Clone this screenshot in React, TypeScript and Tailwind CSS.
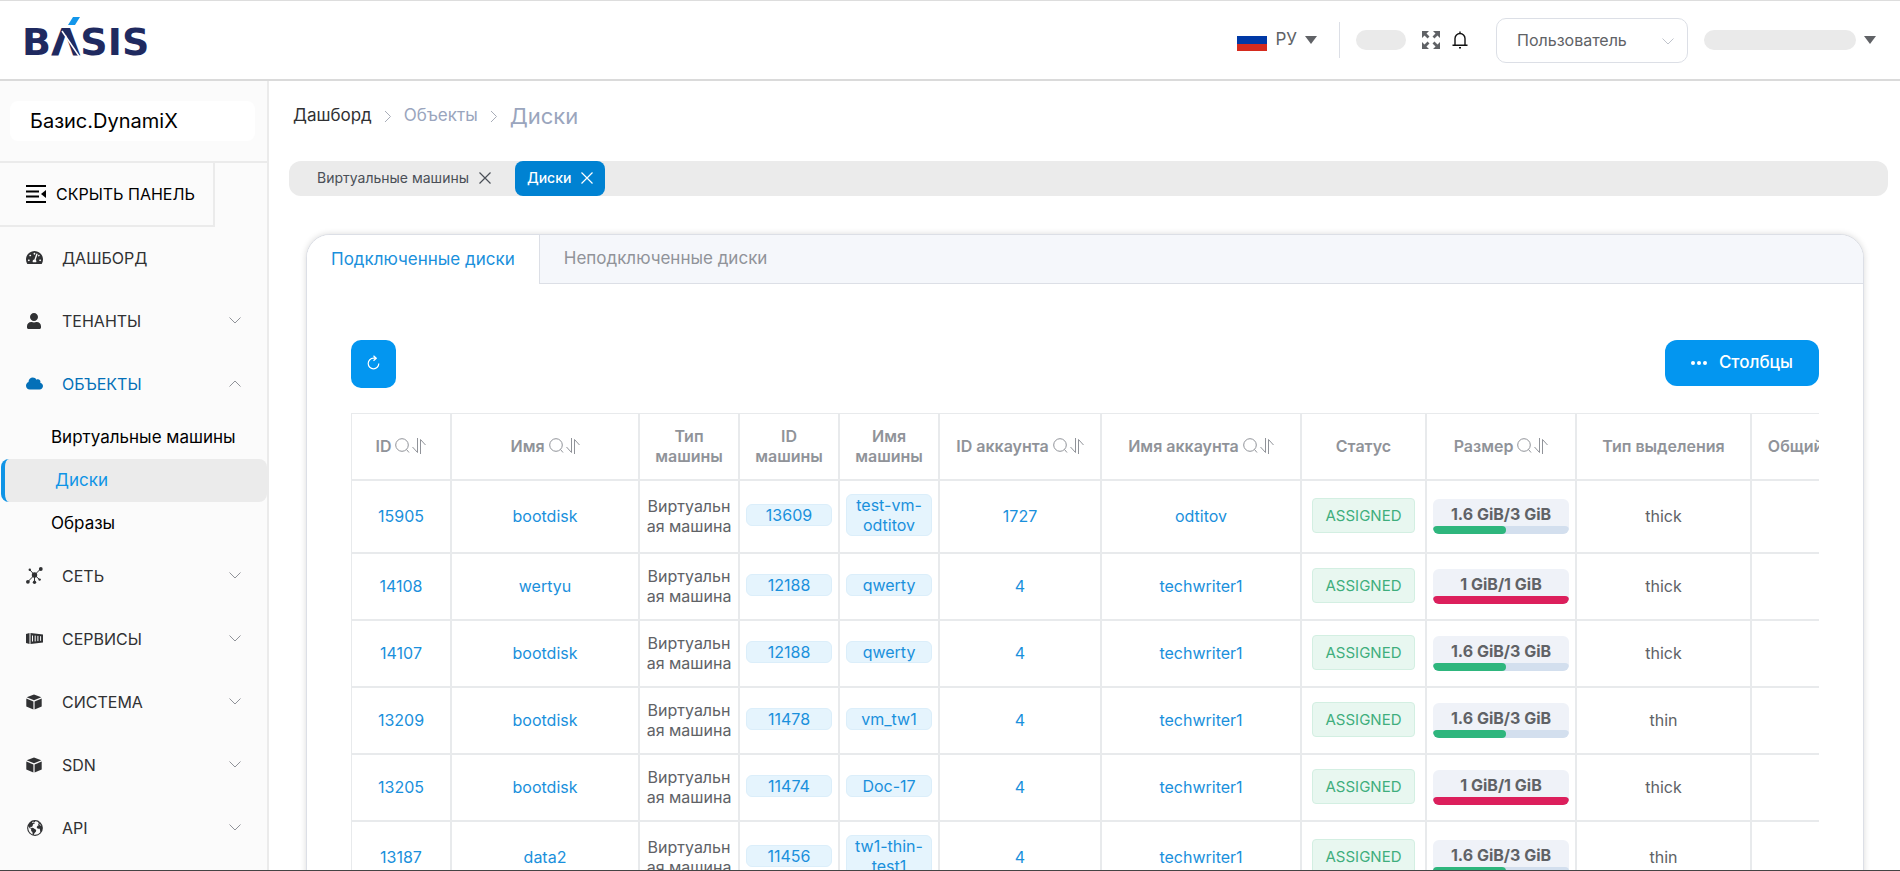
import React, { useState } from "react";
import clsx from "clsx";
import { FaCloud, FaTachometerAlt, FaUser } from "react-icons/fa";
import { IoEarth } from "react-icons/io5";

type Disk = {
  id: number;
  name: string;
  vmId: number;
  vmName: string;
  accountId: number;
  accountName: string;
  used: number;
  size: number;
  provision: string;
};

type MenuEntry = {
  label: string;
  icon: React.ReactNode;
  children?: string[];
};

const disks: Disk[] = [
  { id: 15905, name: "bootdisk", vmId: 13609, vmName: "test-vm-odtitov", accountId: 1727, accountName: "odtitov", used: 1.6, size: 3, provision: "thick" },
  { id: 14108, name: "wertyu", vmId: 12188, vmName: "qwerty", accountId: 4, accountName: "techwriter1", used: 1, size: 1, provision: "thick" },
  { id: 14107, name: "bootdisk", vmId: 12188, vmName: "qwerty", accountId: 4, accountName: "techwriter1", used: 1.6, size: 3, provision: "thick" },
  { id: 13209, name: "bootdisk", vmId: 11478, vmName: "vm_tw1", accountId: 4, accountName: "techwriter1", used: 1.6, size: 3, provision: "thin" },
  { id: 13205, name: "bootdisk", vmId: 11474, vmName: "Doc-17", accountId: 4, accountName: "techwriter1", used: 1, size: 1, provision: "thick" },
  { id: 13187, name: "data2", vmId: 11456, vmName: "tw1-thin-test1", accountId: 4, accountName: "techwriter1", used: 1.6, size: 3, provision: "thin" },
];

const columns = [
  { title: "ID", width: "w-[100px]", tools: true },
  { title: "Имя", width: "w-[188px]", tools: true },
  { title: "Тип машины", width: "w-[100px]" },
  { title: "ID машины", width: "w-[100px]" },
  { title: "Имя машины", width: "w-[100px]" },
  { title: "ID аккаунта", width: "w-[162px]", tools: true },
  { title: "Имя аккаунта", width: "w-[200px]", tools: true },
  { title: "Статус", width: "w-[125px]" },
  { title: "Размер", width: "w-[150px]", tools: true },
  { title: "Тип выделения", width: "w-[175px]" },
  { title: "Общий доступ", width: "w-[150px]" },
];

function Logo() {
  return (
    <svg width="130" height="42" viewBox="0 0 130 42" role="img" aria-label="BASIS" className="overflow-visible">
      <text x="-2" y="38" fontSize="38" className="fill-[#1f2a60] font-['DejaVu_Sans',sans-serif] font-bold">
        BΛSIS
      </text>
      <path d="M38 14 57 42" stroke="#fff" strokeWidth="1.5" />
      <path d="M49 0h7l-5 8h-7z" fill="#1296ea" />
    </svg>
  );
}

function Chevron({ className }: { className?: string }) {
  return (
    <svg width="12" height="7" viewBox="0 0 12 7" fill="none" stroke="currentColor" className={className}>
      <path d="M.5.5 6 6 11.5.5" />
    </svg>
  );
}

function Caret() {
  return (
    <svg width="12" height="8" viewBox="0 0 12 8" className="shrink-0 fill-[#606266]">
      <path d="M0 0h12L6 8z" />
    </svg>
  );
}

function Flag() {
  return (
    <svg width="30" height="22" viewBox="0 0 30 22" className="shrink-0">
      <path d="M0 0h30v7H0z" fill="#fff" />
      <path d="M0 7h30v8H0z" fill="#0039a6" />
      <path d="M0 15h30v7H0z" fill="#d52b1e" />
    </svg>
  );
}

function ExpandIcon() {
  return (
    <svg width="18" height="18" viewBox="0 0 18 18" fill="#606266" stroke="#606266" strokeWidth="2.8">
      <path d="M0 0h7L0 7zM18 0v7l-7-7zM0 18v-7l7 7zM18 18h-7l7-7z" stroke="none" />
      <path d="m2 2 4.5 4.5M16 2l-4.5 4.5M2 16l4.5-4.5M16 16l-4.5-4.5" />
    </svg>
  );
}

function BellIcon() {
  return (
    <svg width="16" height="18" viewBox="0 0 16 18" fill="none" stroke="#111" strokeWidth="1.4">
      <path d="M.5 14.3h15M3 14V7.5a5 5 0 0 1 10 0V14M8 .5v2M7 16.7h2" />
    </svg>
  );
}

function CollapseIcon() {
  return (
    <svg width="20" height="18" viewBox="0 0 20 18" fill="none" stroke="#000" strokeWidth="2">
      <path d="M0 1h20M0 6.5h13M0 11.5h13M0 17h20" />
      <path d="M20 5v8l-5-4z" fill="#000" stroke="none" />
    </svg>
  );
}

function NetworkIcon() {
  return (
    <svg width="17" height="17" viewBox="0 0 17 17" fill="currentColor" stroke="currentColor">
      <path d="m2 14.5 6.5-6.5L14.5 2M4 3l4.5 5 5 4.5M8.5 8v7" fill="none" strokeWidth="1" />
      <g stroke="none">
        <circle cx="8.5" cy="8" r="2.7" />
        <circle cx="1.9" cy="14.8" r="1.9" />
        <circle cx="14.8" cy="2" r="1.9" />
        <circle cx="3.8" cy="2.8" r="1.2" />
        <circle cx="13.6" cy="12.6" r="1.2" />
        <circle cx="8.5" cy="15.3" r="1.7" />
      </g>
    </svg>
  );
}

function ContainerIcon() {
  return (
    <svg width="17" height="13" viewBox="0 0 17 13" fill="currentColor">
      <path d="M0 2 3.5 1v11L0 11zM4.5 1 17 2.5v8L4.5 12z" />
      <path d="M6.5 3.5v6M9.2 3.6v5.8M11.9 3.9v5.2M14.6 4.2v4.6" stroke="#fbfbfb" />
    </svg>
  );
}

function CubeIcon() {
  return (
    <svg width="16" height="16" viewBox="0 0 16 16" fill="currentColor">
      <path d="m8 .5 7.3 2.8L8 6.2.7 3.3zM.3 4.6l7.1 2.8v8.1L.3 12.6zM15.7 4.6v8l-7.1 2.9V7.4z" />
    </svg>
  );
}

function SearchIcon() {
  return (
    <svg width="15" height="15" viewBox="0 0 15 15" fill="none" stroke="#909399">
      <circle cx="7" cy="7" r="6.3" />
      <path d="m11.5 11.5 2.5 3" />
    </svg>
  );
}

function SortIcon() {
  return (
    <svg width="14" height="16" viewBox="0 0 14 16" fill="none" stroke="#909399">
      <path d="M5.5 0v14.5L.5 9M8.5 16V1.5l5 5.5" />
    </svg>
  );
}

function CloseIcon() {
  return (
    <svg width="12" height="12" viewBox="0 0 12 12" fill="none" stroke="currentColor" strokeWidth="1.2">
      <path d="m.5.5 11 11M11.5.5l-11 11" />
    </svg>
  );
}

function RefreshIcon() {
  return (
    <svg width="13" height="15" viewBox="0 0 13 15" fill="none" stroke="#fff" strokeWidth="1.2">
      <path d="M9 3.2H6.5a5.3 5.3 0 1 0 5.3 5.3M6.5.7 9.3 3.2 6.5 5.8" />
    </svg>
  );
}

const menu: MenuEntry[] = [
  { label: "ДАШБОРД", icon: <FaTachometerAlt size={17} /> },
  { label: "ТЕНАНТЫ", icon: <FaUser size={16} />, children: [] },
  { label: "ОБЪЕКТЫ", icon: <FaCloud size={17} />, children: ["Виртуальные машины", "Диски", "Образы"] },
  { label: "СЕТЬ", icon: <NetworkIcon />, children: [] },
  { label: "СЕРВИСЫ", icon: <ContainerIcon />, children: [] },
  { label: "СИСТЕМА", icon: <CubeIcon />, children: [] },
  { label: "SDN", icon: <CubeIcon />, children: [] },
  { label: "API", icon: <IoEarth size={18} />, children: [] },
];

function Header() {
  return (
    <header className="flex h-[81px] shrink-0 items-center border-t border-b-2 border-t-[#dddddd] border-b-[#dadada] bg-white px-6">
      <a href="#" className="pb-1">
        <Logo />
      </a>
      <div className="ml-auto flex items-center">
        <button className="flex items-center gap-2 text-[17px] text-[#606266]">
          <Flag />
          РУ
          <Caret />
        </button>
        <div className="mr-4 ml-[22px] h-9 w-px bg-[#dcdfe6]" />
        <div className="h-5 w-[50px] rounded-full bg-[#eaeaea]" />
        <button className="ml-4" aria-label="fullscreen">
          <ExpandIcon />
        </button>
        <button className="ml-3" aria-label="notifications">
          <BellIcon />
        </button>
        <div className="relative ml-7">
          <select
            aria-label="role"
            className="h-[45px] w-[192px] appearance-none rounded-[10px] border border-[#dcdfe6] bg-white pl-5 text-base text-[#606266]"
          >
            <option>Пользователь</option>
          </select>
          <Chevron className="pointer-events-none absolute top-5 right-3.5 text-[#c0c4cc]" />
        </div>
        <div className="mr-2 ml-4 h-5 w-[152px] rounded-full bg-[#eaeaea]" />
        <button aria-label="account">
          <Caret />
        </button>
      </div>
    </header>
  );
}

function Sidebar({ current }: { current: string }) {
  const [opened, setOpened] = useState("ОБЪЕКТЫ");

  return (
    <aside className="w-[269px] shrink-0 overflow-hidden border-r-2 border-[#ebebeb] bg-[#fbfbfb]">
      <div className="border-b-2 border-[#ebebeb] py-5 pr-3 pl-2.5">
        <div className="rounded-lg bg-white py-1.5 pl-5 text-xl leading-7 text-black">Базис.DynamiX</div>
      </div>
      <button className="flex h-16 w-[215px] items-center gap-2.5 border-r-2 border-b-2 border-[#ebebeb] pl-[26px] text-base text-black">
        <CollapseIcon />
        СКРЫТЬ ПАНЕЛЬ
      </button>
      <nav>
        {menu.map((item) => {
          const active = item.label === opened;
          return (
            <div key={item.label}>
              <button
                onClick={() => setOpened(active ? "" : item.label)}
                className={clsx(
                  "flex h-[63px] w-full items-center px-[26px] pb-0.5 text-base",
                  active ? "text-[#0470b8]" : "text-[#303133]"
                )}
              >
                <span className="flex w-9 items-center">{item.icon}</span>
                {item.label}
                {item.children && <Chevron className={clsx("ml-auto text-[#909399]", active && "rotate-180")} />}
              </button>
              {active &&
                item.children?.map((child) => (
                  <a
                    key={child}
                    href="#"
                    className={clsx(
                      "flex h-[43px] items-center text-[17px]",
                      child === current
                        ? "ml-px rounded-lg border-l-4 border-[#0f94e6] bg-[#ebebeb] pl-[50px] text-[#0f94e6]"
                        : "pl-[51px] text-black"
                    )}
                  >
                    {child}
                  </a>
                ))}
            </div>
          );
        })}
      </nav>
    </aside>
  );
}

function Tag({ children }: { children: React.ReactNode }) {
  return (
    <a href="#" className="block rounded-md border border-[#dbeefa] bg-[#e5f4fd] px-1 leading-5 text-[#1a90dc]">
      {children}
    </a>
  );
}

function SizeBar({ used, size }: { used: number; size: number }) {
  return (
    <div className="overflow-hidden rounded-md bg-[#eff2f8]">
      <div className="pt-1 text-base leading-[23px] font-bold text-[#606266]">
        {used} GiB/{size} GiB
      </div>
      <div className="h-2 rounded-full bg-[#d3dfee]">
        <div
          className={clsx("h-2 rounded-full", used === size ? "bg-[#dc1f5c]" : "bg-[#2eb67d]")}
          style={{ width: `${(used / size) * 100}%` }}
        />
      </div>
    </div>
  );
}

function DiskTable() {
  const cell = "border-r-2 border-b-2 border-[#e8eaec]";
  const textCell = clsx(cell, "pb-0.5");

  return (
    <div className="mt-[25px] overflow-hidden border-t border-l border-[#e8eaec]">
      <table className="w-[1550px] table-fixed border-separate border-spacing-0 text-center text-base leading-5">
        <thead>
          <tr className="h-[67px] text-[#909399]">
            {columns.map((col) => (
              <th key={col.title} className={clsx(textCell, col.width, "px-2 font-semibold")}>
                {col.tools ? (
                  <span className="flex items-center justify-center gap-1 whitespace-nowrap">
                    {col.title}
                    <span className="flex gap-0.5">
                      <SearchIcon />
                      <SortIcon />
                    </span>
                  </span>
                ) : (
                  col.title
                )}
              </th>
            ))}
          </tr>
        </thead>
        <tbody>
          {disks.map((disk) => (
            <tr
              key={disk.id}
              className={clsx("text-[#606266]", disk.vmName.length > 10 ? "h-[73px]" : "h-[67px]")}
            >
              <td className={textCell}>
                <a href="#" className="text-[#1a90dc]">{disk.id}</a>
              </td>
              <td className={textCell}>
                <a href="#" className="text-[#1a90dc]">{disk.name}</a>
              </td>
              <td className={clsx(textCell, "px-1.5 break-all")}>Виртуальная машина</td>
              <td className={clsx(cell, "px-1.5 pb-1")}>
                <Tag>{disk.vmId}</Tag>
              </td>
              <td className={clsx(cell, "px-1.5 pb-1")}>
                <Tag>{disk.vmName}</Tag>
              </td>
              <td className={textCell}>
                <a href="#" className="text-[#1a90dc]">{disk.accountId}</a>
              </td>
              <td className={textCell}>
                <a href="#" className="text-[#1a90dc]">{disk.accountName}</a>
              </td>
              <td className={clsx(textCell, "px-2.5")}>
                <div className="rounded border border-[#d3efe2] bg-[#e8f7f0] text-[15px] leading-[33px] text-[#3fae7d]">
                  ASSIGNED
                </div>
              </td>
              <td className={clsx(cell, "px-1.5")}>
                <SizeBar used={disk.used} size={disk.size} />
              </td>
              <td className={textCell}>{disk.provision}</td>
              <td className={cell} />
            </tr>
          ))}
        </tbody>
      </table>
    </div>
  );
}

export default function App() {
  const [tab, setTab] = useState("Подключенные диски");
  const tabs = ["Подключенные диски", "Неподключенные диски"];

  return (
    <div className="flex h-screen flex-col overflow-hidden border-b border-[#444444] bg-white font-['Inter','Liberation_Sans',sans-serif]">
      <Header />
      <div className="flex min-h-0 flex-1">
        <Sidebar current="Диски" />
        <main className="min-w-0 flex-1 overflow-hidden">
          <div className="flex h-20 items-center gap-2.5 pb-2.5 pl-6 text-[17px] text-[#9aa5bd]">
            <a href="#" className="text-[#303133]">Дашборд</a>
            <Chevron className="-rotate-90 text-[#a8adb8]" />
            <a href="#">Объекты</a>
            <Chevron className="-rotate-90 text-[#a8adb8]" />
            <span className="text-[22px]">Диски</span>
          </div>

          {/* opened pages */}
          <div className="mr-3 ml-5 flex h-[35px] rounded-xl bg-[#ebebeb] pl-5 text-sm">
            <div className="mr-4 flex items-center gap-2.5 px-2 pb-0.5 text-[#4a4f57]">
              Виртуальные машины
              <button aria-label="close">
                <CloseIcon />
              </button>
            </div>
            <div className="flex items-center gap-2.5 rounded-lg bg-[#0082d2] px-3 pb-0.5 font-medium text-white">
              Диски
              <button aria-label="close">
                <CloseIcon />
              </button>
            </div>
          </div>

          <section className="mt-[38px] mr-9 ml-[37px] h-full overflow-hidden rounded-3xl border border-[#dcdfe6] bg-white shadow-[0_0_6px_rgba(0,0,0,0.15)]">
            <div className="flex h-[49px] border-b border-[#dcdfe6] bg-[#f5f7fb] text-[17px]">
              {tabs.map((name) => (
                <button
                  key={name}
                  onClick={() => setTab(name)}
                  className={clsx(
                    "px-6",
                    name === tab ? "h-[49px] border-r border-[#dcdfe6] bg-white text-[#1a90dc]" : "text-[#909399]"
                  )}
                >
                  {name}
                </button>
              ))}
            </div>

            <div className="px-11 pt-14">
              <div className="flex h-12 items-start justify-between">
                <button
                  aria-label="refresh"
                  className="flex h-12 w-[45px] items-center justify-center rounded-[10px] bg-[#0396f0] pb-1"
                >
                  <RefreshIcon />
                </button>
                <button className="flex h-[46px] items-center gap-3 rounded-xl bg-[#0396f0] px-[26px] text-[17px] font-medium text-white">
                  <svg width="16" height="4" viewBox="0 0 16 4" fill="#fff">
                    <circle cx="2" cy="2" r="2" />
                    <circle cx="8" cy="2" r="2" />
                    <circle cx="14" cy="2" r="2" />
                  </svg>
                  Столбцы
                </button>
              </div>
              <DiskTable />
            </div>
          </section>
        </main>
      </div>
    </div>
  );
}
